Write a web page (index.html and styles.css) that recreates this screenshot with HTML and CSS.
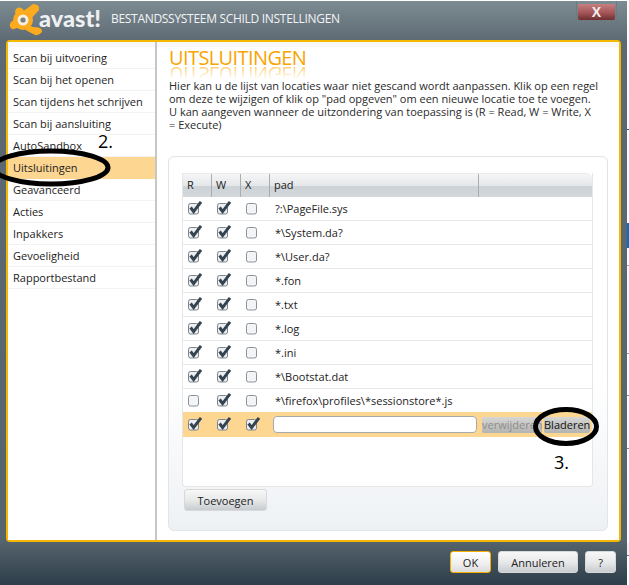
FILE: index.html
```html
<!DOCTYPE html>
<html lang="nl">
<head>
<meta charset="utf-8">
<title>avast! Bestandssysteem schild instellingen</title>
<link rel="stylesheet" href="styles.css">
</head>
<body>
<svg class="sprite" width="0" height="0" aria-hidden="true">
  <symbol id="box" viewBox="0 0 18 18">
    <rect x="0.5" y="3.5" width="10" height="10.5" rx="2" fill="#f3f4f6" stroke="#8b9198"/>
  </symbol>
  <symbol id="check" viewBox="0 0 18 18">
    <rect x="0.5" y="3.5" width="10" height="10.5" rx="2" fill="#eceef1" stroke="#7d848c"/>
    <path d="M2.6 7.5 L5.6 11.6 L13 1.8" fill="none" stroke="#35424f" stroke-width="3"/>
  </symbol>
</svg>
<div class="window">
  <header class="titlebar">
    <svg class="splat" width="46" height="38" viewBox="0 0 46 38" aria-hidden="true">
      <g fill="#fbab1d">
        <circle cx="23" cy="19" r="10"/>
        <path d="M21 12 L33 3 Q40 3 39 9 L29 20 Z"/>
        <path d="M17 14 Q13 11 17 7 Q22 5 25 12 Z"/>
        <path d="M17 17 L11 21 Q8 25 12 28 Q16 29 19 25 L25 24 Z"/>
        <path d="M26 23 L33 26 Q43 26 42 31 Q38 36 33 33 Q27 30 21 26 Z"/>
      </g>
      <circle cx="23" cy="19" r="5.5" fill="#f6efe0"/>
      <circle cx="23" cy="19" r="2.6" fill="#7d7f80"/>
    </svg>
    <span class="brand">avast!</span>
    <h1 class="wintitle">BESTANDSSYSTEEM SCHILD INSTELLINGEN</h1>
    <div class="closebox"><button class="close" type="button">X</button></div>
  </header>
  <div class="panel">
    <nav class="side">
      <div class="side-item">Scan bij uitvoering</div>
      <div class="side-item">Scan bij het openen</div>
      <div class="side-item">Scan tijdens het schrijven</div>
      <div class="side-item">Scan bij aansluiting</div>
      <div class="side-item">AutoSandbox</div>
      <div class="side-item selected">Uitsluitingen</div>
      <div class="side-item">Geavanceerd</div>
      <div class="side-item">Acties</div>
      <div class="side-item">Inpakkers</div>
      <div class="side-item">Gevoeligheid</div>
      <div class="side-item">Rapportbestand</div>
    </nav>
    <main class="main">
      <div class="heading">
        <h2 class="h" data-reflect="UITSLUITINGEN">UITSLUITINGEN</h2>
      </div>
      <p class="intro">Hier kan u de lijst van locaties waar niet gescand wordt aanpassen. Klik op een regel<br>om deze te wijzigen of klik op "pad opgeven" om een nieuwe locatie toe te voegen.<br>U kan aangeven wanneer de uitzondering van toepassing is (R = Read, W = Write, X<br>= Execute)</p>
      <section class="card">
        <div class="table">
          <div class="row head">
            <div class="th">R</div><div class="th">W</div><div class="th">X</div><div class="th pad">pad</div><div class="th last"></div>
          </div>
          <div class="row"><svg class="cb"><use href="#check"/></svg><svg class="cb"><use href="#check"/></svg><svg class="cb"><use href="#box"/></svg><div class="path">?:\PageFile.sys</div></div>
          <div class="row"><svg class="cb"><use href="#check"/></svg><svg class="cb"><use href="#check"/></svg><svg class="cb"><use href="#box"/></svg><div class="path">*\System.da?</div></div>
          <div class="row"><svg class="cb"><use href="#check"/></svg><svg class="cb"><use href="#check"/></svg><svg class="cb"><use href="#box"/></svg><div class="path">*\User.da?</div></div>
          <div class="row"><svg class="cb"><use href="#check"/></svg><svg class="cb"><use href="#check"/></svg><svg class="cb"><use href="#box"/></svg><div class="path">*.fon</div></div>
          <div class="row"><svg class="cb"><use href="#check"/></svg><svg class="cb"><use href="#check"/></svg><svg class="cb"><use href="#box"/></svg><div class="path">*.txt</div></div>
          <div class="row"><svg class="cb"><use href="#check"/></svg><svg class="cb"><use href="#check"/></svg><svg class="cb"><use href="#box"/></svg><div class="path">*.log</div></div>
          <div class="row"><svg class="cb"><use href="#check"/></svg><svg class="cb"><use href="#check"/></svg><svg class="cb"><use href="#box"/></svg><div class="path">*.ini</div></div>
          <div class="row"><svg class="cb"><use href="#check"/></svg><svg class="cb"><use href="#check"/></svg><svg class="cb"><use href="#box"/></svg><div class="path">*\Bootstat.dat</div></div>
          <div class="row"><svg class="cb"><use href="#box"/></svg><svg class="cb"><use href="#check"/></svg><svg class="cb"><use href="#box"/></svg><div class="path">*\firefox\profiles\*sessionstore*.js</div></div>
          <div class="row editing">
            <svg class="cb"><use href="#check"/></svg><svg class="cb"><use href="#check"/></svg><svg class="cb"><use href="#check"/></svg>
            <div class="edit-cell">
              <div class="field"></div>
              <button class="mini disabled" type="button">verwijderen</button>
              <button class="mini browse" type="button">Bladeren</button>
            </div>
          </div>
        </div>
        <button class="btn add" type="button">Toevoegen</button>
      </section>
    </main>
  </div>
  <footer class="footer">
    <button class="btn ok" type="button">OK</button>
    <button class="btn cancel" type="button">Annuleren</button>
    <button class="btn help" type="button">?</button>
  </footer>
</div>
<svg class="marks" width="629" height="585" viewBox="0 0 629 585" aria-hidden="true">
  <ellipse cx="51" cy="167.5" rx="57" ry="16.5" fill="none" stroke="#000" stroke-width="5"/>
  <ellipse cx="566" cy="426.5" rx="30.5" ry="17" fill="none" stroke="#000" stroke-width="5"/>
</svg>
<div class="note note-2">2.</div>
<div class="note note-3">3.</div>
</body>
</html>
```
FILE: styles.css
```css
* { box-sizing: border-box; }
html, body { margin: 0; padding: 0; }
body {
  width: 629px;
  height: 585px;
  overflow: hidden;
  position: relative;
  font-family: "Open Sans", "Liberation Sans", sans-serif;
  font-size: 11px;
  color: #222;
  background: linear-gradient(to bottom,
    #fff 0 129px, #1c5fa8 129px 130px, #fff 130px 223px,
    #0a6cc9 223px 248px, #fff 248px 265px, #aaa 265px 266px,
    #f8f8f8 266px 353px, #9ab 353px 354px, #fff 354px 395px,
    #7b8fa5 395px 396px, #fff 396px 448px, #7b8fa5 448px 449px,
    #fff 449px 543px, #f0f0f0 543px 555px, #47a 555px 556px, #fff 556px);
}
.sprite { position: absolute; }
.window {
  width: 627px;
  height: 584px;
  margin-top: 1px;
  display: flex;
  flex-direction: column;
  background: linear-gradient(to bottom, #7d8b93 0, #5d6a73 40px, #56646d 540px, #2d3d49 584px);
}
.titlebar {
  height: 39px;
  flex: none;
  display: flex;
  align-items: flex-start;
  color: #f2f4f5;
}
.splat { flex: none; }
.brand {
  width: 72px;
  margin-left: -7px;
  margin-top: 2px;
  font-family: "Lato", sans-serif;
  font-weight: 900;
  font-size: 23.5px;
  line-height: 30px;
  color: #eef0f1;
}
.wintitle {
  margin: 10px 0 0;
  font-weight: 400;
  font-size: 12px;
  line-height: 16px;
  letter-spacing: -0.3px;
  white-space: nowrap;
}
.closebox {
  margin-left: auto;
  margin-right: 10px;
  padding: 0 1px 1px;
  height: 20px;
  border: 1px solid #6d7a82;
  border-top: 0;
  border-radius: 0 0 3px 3px;
}
.close {
  display: block;
  width: 37px;
  height: 16px;
  margin-top: 3px;
  padding: 0;
  border: 0;
  border-radius: 0 0 2px 2px;
  background: linear-gradient(to bottom, #c77f80, #a45557 55%, #6e2f31);
  color: #f4eeee;
  font-family: "Liberation Sans", sans-serif;
  font-weight: 700;
  font-size: 14px;
  line-height: 14px;
}
.panel {
  width: 615px;
  height: 502px;
  margin-left: 6px;
  flex: none;
  display: flex;
  border: 2px solid #f5b800;
  border-radius: 4px;
  background: #fff;
}
.side {
  width: 149px;
  flex: none;
  padding-top: 5px;
  border-right: 2px solid #c4c6c8;
  background: linear-gradient(to bottom, #f8f8f8 0 5px, #fff 5px);
}
.side-item {
  height: 22px;
  padding-left: 5px;
  line-height: 21px;
  border-bottom: 1px solid #f3f3f3;
  color: #1c1c1c;
}
.selected { background: #fdd692; border-bottom: 0; }
.main {
  flex: 1;
  min-width: 0;
  padding: 7px 13px 0 12px;
  background: linear-gradient(to bottom, #f8f8f8 0 5px, #fff 5px);
}
.heading { height: 30px; }
.h {
  margin: 0;
  height: 18px;
  font-weight: 400;
  font-size: 20px;
  line-height: 18px;
  letter-spacing: -0.6px;
  color: #f9a400;
  white-space: nowrap;
}
.h::after {
  content: attr(data-reflect);
  display: block;
  margin-top: -2px;
  transform: scaleY(-1);
  opacity: .6;
  -webkit-mask-image: linear-gradient(to top, #000, transparent 80%);
  mask-image: linear-gradient(to top, #000, transparent 80%);
}
.intro {
  margin: 0;
  white-space: nowrap;
  line-height: 13px;
  color: #2a2a2a;
}
.card {
  width: 440px;
  height: 375px;
  margin: 25px 0 0 -1px;
  padding: 16px 13px 0;
  border: 1px solid #e3e3e8;
  border-radius: 6px;
  background: linear-gradient(to bottom, #fff 60%, #eef1f4);
}
.table {
  width: 411px;
  height: 314px;
  border: 1px solid #e4e6e8;
  border-top: 0;
  border-radius: 0 0 4px 4px;
  background: #fff;
}
.row {
  display: grid;
  grid-template-columns: 29px 29px 29px 1fr;
  height: 24px;
  align-items: center;
  border-bottom: 1px solid #e7e7e9;
}
.row.head {
  grid-template-columns: 29px 29px 29px 209px 1fr;
  background: linear-gradient(to bottom, #f5f6f6, #e4e7e9 50%, #cdd2d6 55%, #d4d8dc);
  border-bottom: 0;
  border-top: 1px solid #eaeaec;
  border-radius: 0 6px 0 0;
}
.th {
  height: 100%;
  padding-left: 4px;
  line-height: 22px;
  border-right: 1px solid #a9adb0;
}
.th.last { border-right: 0; }
.cb { width: 18px; height: 18px; margin-left: 5px; overflow: visible; }
.path { padding-left: 5px; white-space: nowrap; }
.row.editing { height: 25px; margin-top: -1px; background: #fdd692; border-bottom: 0; }
.edit-cell { display: flex; align-items: center; padding-left: 3px; }
.field {
  width: 204px;
  height: 17px;
  flex: none;
  border: 1px solid #a7a9ab;
  border-radius: 4px;
  background: #fff;
}
.mini {
  height: 16px;
  padding: 0;
  border: 0;
  border-radius: 2px;
  background: linear-gradient(to bottom, #d6d6d4, #b3b3b1);
  font: inherit;
  line-height: 15px;
  color: #111;
  overflow: hidden;
  white-space: nowrap;
}
.disabled { width: 60px; margin-left: 5px; color: #8d8d8b; }
.browse { width: 46px; margin-left: 2px; }
.btn {
  height: 22px;
  padding: 0;
  border: 1px solid #d6d8da;
  border-radius: 3px;
  background: linear-gradient(to bottom, #f7f7f7, #e8e9ea 50%, #c8ccd0);
  font: inherit;
  color: #222;
}
.add { display: block; width: 83px; margin: 2px 0 0 2px; }
.footer {
  flex: 1;
  display: flex;
  justify-content: flex-end;
  gap: 7px;
  padding: 9px 11px 0 0;
}
.ok { width: 41px; border-color: #f5b000; background: linear-gradient(to bottom, #fff, #eeeeee 60%, #dcdcdc); }
.cancel { width: 80px; }
.help { width: 31px; }
.marks { position: absolute; left: 0; top: 0; pointer-events: none; }
.note {
  position: absolute;
  font-family: "Open Sans", sans-serif;
  font-size: 18px;
  line-height: 20px;
  color: #000;
}
.note-2 { left: 98px; top: 131px; }
.note-3 { left: 554px; top: 452px; }
```
